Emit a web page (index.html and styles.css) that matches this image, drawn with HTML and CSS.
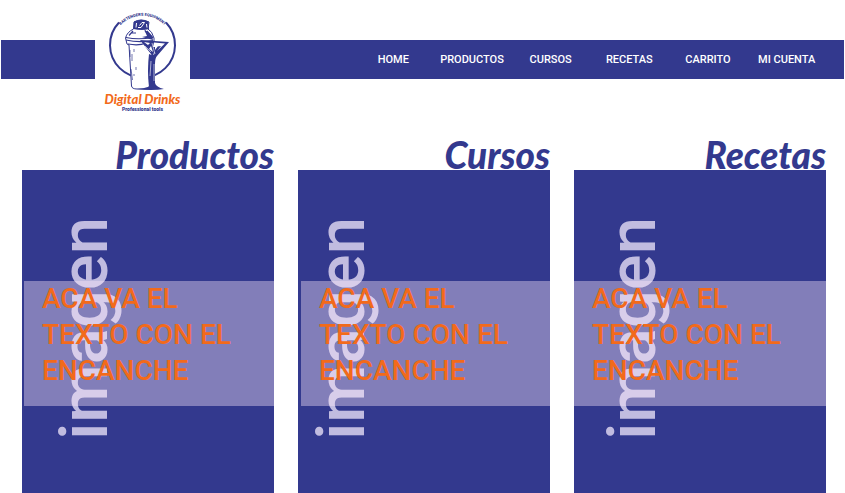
FILE: index.html
```html
<!DOCTYPE html>
<html lang="es">
<head>
<meta charset="utf-8">
<meta name="viewport" content="width=device-width, initial-scale=1">
<title>Digital Drinks</title>
<link rel="stylesheet" href="styles.css">
</head>
<body>
<header class="header">
  <nav class="nav">
    <ul class="nav-list">
      <li><a href="#home">HOME</a></li>
      <li><a href="#productos">PRODUCTOS</a></li>
      <li><a href="#cursos">CURSOS</a></li>
      <li><a href="#recetas">RECETAS</a></li>
      <li><a href="#carrito">CARRITO</a></li>
      <li><a href="#cuenta">MI CUENTA</a></li>
    </ul>
  </nav>
  <a class="brand" href="#home">
    <svg class="brand-mark" viewBox="95 8 95 84" aria-hidden="true">
      <path id="arc" d="M118 28.500A30 30 0 0 1 167 28.500" fill="none"/>
      <path d="M119 22.500A32.500 32.500 0 1 0 166 22.500" fill="none" stroke="#33398e" stroke-width="2"/>
      <text class="brand-arc"><textPath href="#arc" startOffset="50%" text-anchor="middle">BARTENDERS EQUIPMENT</textPath></text>
      <path d="M125.500 38L127 44L129 45L131.500 86Q132 89 137 89H150Q154 88 154 85L154 44V38Q152 31 148 29L149 22Q141 18 134 22L133.500 29Q127 32 125.500 38Z" fill="#fff" stroke="#33398e" stroke-width="1"/>
      <path d="M134 21.500Q141 18 148.500 21.500L149 29Q142 31 133.500 29Z" fill="#33398e"/>
      <path d="M136.500 23L136 27.500M139.500 25.500L142 22.500H144.500L141 27.500H138M146.500 24L147 27.500" fill="none" stroke="#fff" stroke-width="1"/>
      <path d="M126 37.500Q138 40 153 37.500M126 40Q139 43 153 40.500M128 44Q139 46 146 43M129 35.500L133 31M132 33H136M145 31L151 36M147 31L153 38" fill="none" stroke="#33398e" stroke-width="1.200"/>
      <path d="M144 29L152 36L153 40L142 37L147 36Z" fill="#33398e"/>
      <path d="M130 50V57M132 54V61M131 69L132.500 80M134 49V52M136 67V70M134 74V76" stroke="#33398e" stroke-width=".7"/>
      <path d="M149 54Q147 71 149 87L153 88L154 56Z" fill="#33398e"/>
      <path d="M140 40L169 42L157 56Q155 58 155 64V83Q156 87 164 89Q152 91 137 89Q151 88 152 83L153 61Q153 57 151 54Z" fill="#33398e"/>
      <path d="M154 42.500L165 43.500L157 51L161 46L153 47ZM144 42L150 43L148 45ZM151 46L153 52L149 49ZM155 45L159 45L155 50Z" fill="#fff"/>
      <path d="M154.500 52L153.500 55M151 61L150 76M154 64V81M145 46L151 52M152 43L155 54" stroke="#fff" stroke-width=".6"/>
    </svg>
    <span class="brand-name">Digital Drinks</span>
    <span class="brand-tag">Professional tools</span>
  </a>
</header>
<main class="sections">
  <section class="section section-productos" id="productos">
    <h2>Productos</h2>
    <div class="card">
      <span class="placeholder">imagen</span>
      <p class="caption">ACA VA EL TEXTO CON EL ENCANCHE</p>
    </div>
  </section>
  <section class="section section-cursos" id="cursos">
    <h2>Cursos</h2>
    <div class="card">
      <span class="placeholder">imagen</span>
      <p class="caption">ACA VA EL TEXTO CON EL ENCANCHE</p>
    </div>
  </section>
  <section class="section section-recetas" id="recetas">
    <h2>Recetas</h2>
    <div class="card">
      <span class="placeholder">imagen</span>
      <p class="caption">ACA VA EL TEXTO CON EL ENCANCHE</p>
    </div>
  </section>
</main>
</body>
</html>
```
FILE: styles.css
```css
:root {
  --blue: #33398e;
  --orange: #f26a1b;
}

* {
  box-sizing: border-box;
}

body {
  margin: 0;
  min-height: 100vh;
  display: flex;
  flex-direction: column;
  background: #fff;
  font-family: Roboto, "Liberation Sans", sans-serif;
}

.header {
  display: grid;
}

.nav,
.brand {
  grid-area: 1 / 1;
}

.nav {
  align-self: start;
  margin: 40px 1px 0;
  padding-right: 18px;
  background: var(--blue);
}

.nav-list {
  display: grid;
  grid-template-columns: repeat(6, 1fr);
  width: 56%;
  min-width: 472px;
  margin: 0 0 0 auto;
  padding: 0;
  list-style: none;
  text-align: center;
}

.nav a {
  display: block;
  color: #fff;
  font-size: 11px;
  font-weight: 500;
  line-height: 39px;
  text-decoration: none;
  white-space: nowrap;
}

.brand {
  justify-self: start;
  display: flex;
  flex-direction: column;
  align-items: center;
  width: 95px;
  margin-left: 95px;
  padding-top: 8px;
  background: #fff;
  text-decoration: none;
  white-space: nowrap;
}

.brand-mark {
  display: block;
  width: 95px;
  height: 84px;
}

.brand-arc {
  fill: var(--blue);
  font-size: 4px;
  font-weight: 900;
}

.brand-name {
  color: var(--orange);
  font-family: Lato, sans-serif;
  font-size: 13px;
  font-style: italic;
  font-weight: 900;
  line-height: 14px;
}

.brand-tag {
  color: var(--blue);
  font-size: 5px;
  font-weight: 900;
  line-height: 7px;
}

.sections {
  flex: 1;
  display: grid;
  grid-template-columns: repeat(3, 1fr);
  gap: 24px;
  padding: 22px 19px 0 22px;
}

.section {
  display: flex;
  flex-direction: column;
}

/* The card rises over the foot of the title */
.section h2 {
  margin: 0 0 -5px;
  color: var(--blue);
  font-family: Lato, sans-serif;
  font-size: 37px;
  font-style: italic;
  font-weight: 900;
  line-height: 40px;
  text-align: right;
}

.card {
  flex: 1;
  display: grid;
  align-items: start;
  padding-bottom: 56px;
  background: var(--blue);
}

.placeholder,
.caption {
  grid-area: 1 / 1;
}

.placeholder {
  justify-self: start;
  margin: 47px 0 0 var(--image-inset);
  color: #c1bce0;
  font-size: 67px;
  font-weight: 500;
  line-height: 72px;
  writing-mode: vertical-rl;
  transform: rotate(180deg);
}

.caption {
  z-index: 1;
  min-height: 125px;
  margin: 111px 0 0 var(--band-inset);
  padding: 0 32px 0 18px;
  background: rgba(251, 230, 250, 0.4);
  color: var(--orange);
  font-size: 28px;
  font-weight: 500;
  line-height: 36px;
}

.section-productos {
  --image-inset: 26px;
  --band-inset: 2px;
}

.section-cursos {
  --image-inset: 7px;
  --band-inset: 3px;
}

.section-recetas {
  --image-inset: 22px;
  --band-inset: 0px;
}
```
